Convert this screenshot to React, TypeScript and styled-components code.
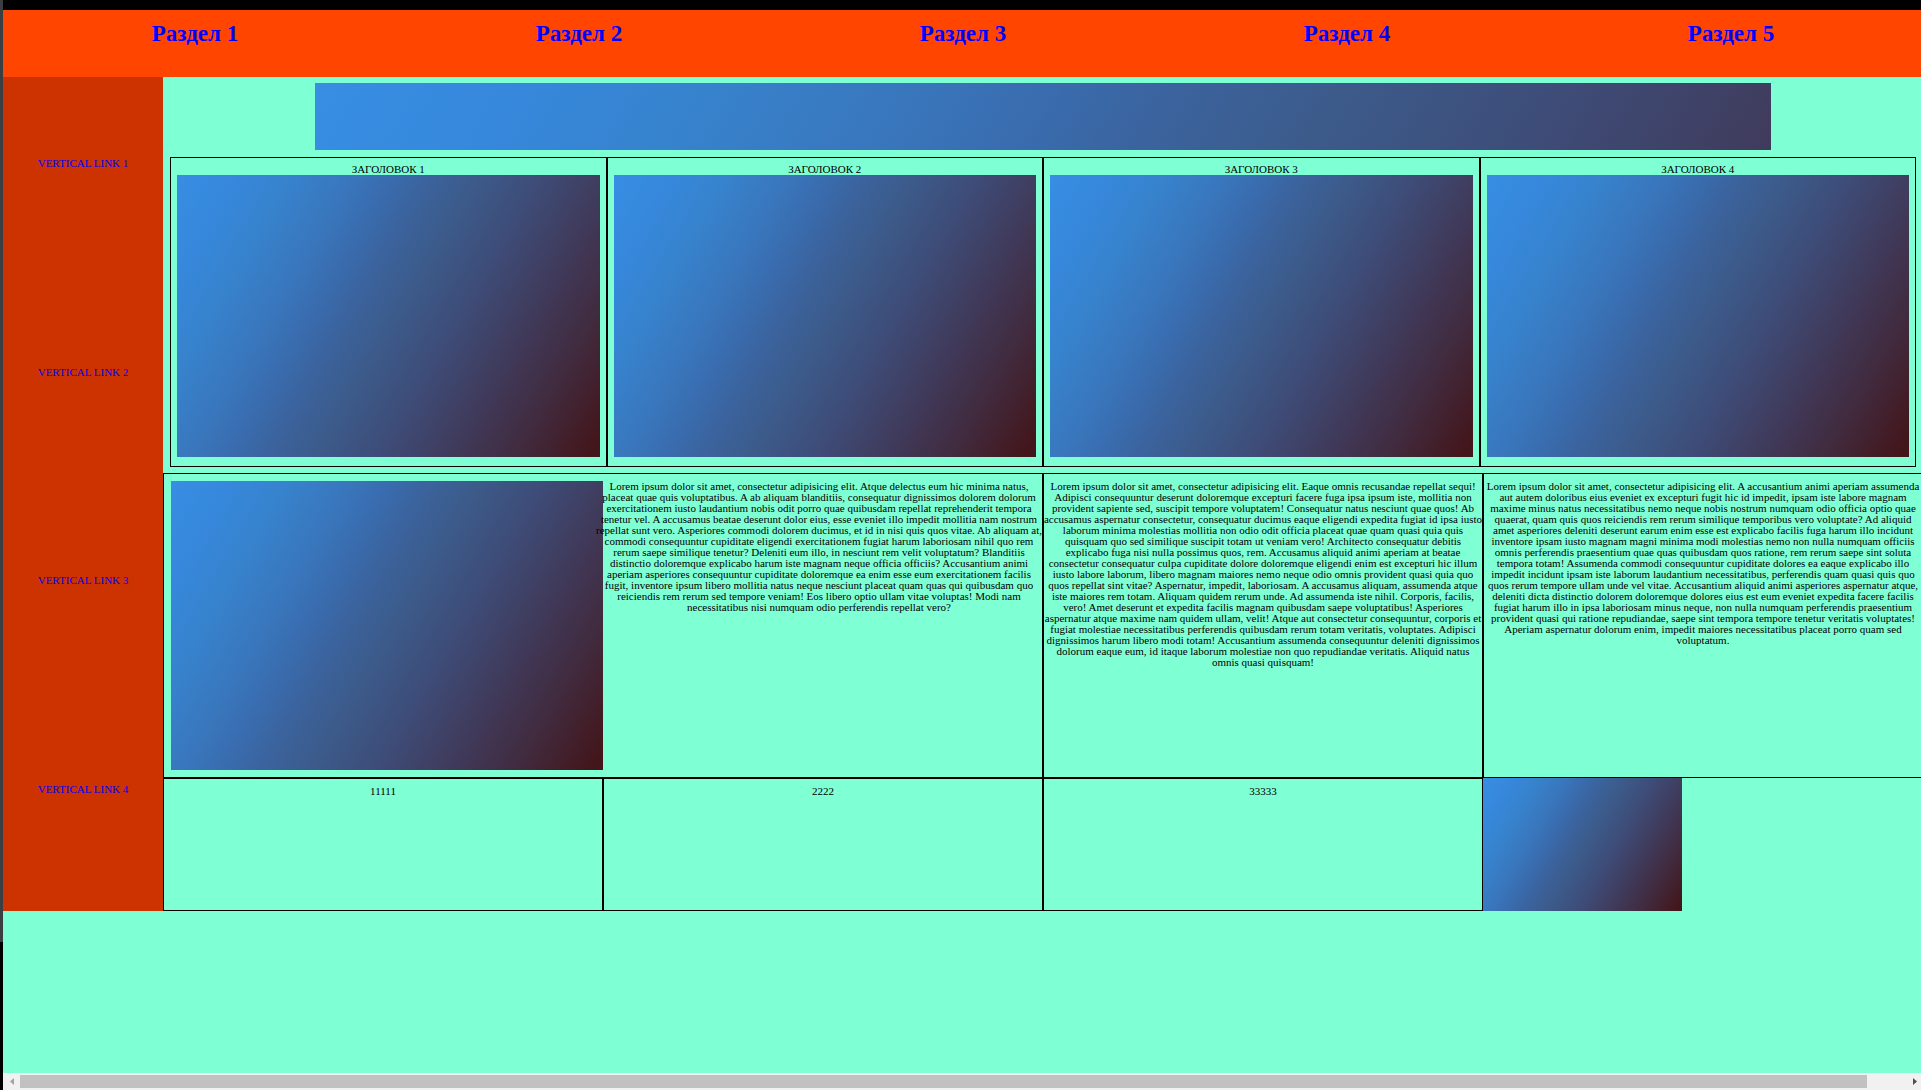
import React from "react";
import styled, { createGlobalStyle } from "styled-components";

const GlobalStyle = createGlobalStyle`
  * { box-sizing: border-box; margin: 0; padding: 0; }
  body {
    background: #000;
    font: 11px/11px "Liberation Serif", "Times New Roman", serif;
    color: #000;
    overflow: hidden;
  }
  a { color: #00f; text-decoration: none; }
`;

const Screen = styled.div`
  display: grid;
  grid-template-columns: 3px minmax(0, 1fr);
  height: 100vh;
  padding-top: 10px;
  background: linear-gradient(#3c3f41, #3c3f41) 0 0 / 3px 942px no-repeat #000;
`;

const Viewport = styled.div`
  grid-column: 2;
  display: flex;
  flex-direction: column;
  overflow: hidden;
  background: #7fffd4;
`;

const Page = styled.div`
  flex: 1;
  width: calc(100% + 2px);
`;

const TopNav = styled.nav`
  display: grid;
  grid-template-columns: repeat(5, 1fr);
  height: 67px;
  padding-top: 10px;
  background: #ff4500;
  font-size: 23px;
  line-height: 27px;
  font-weight: bold;
  text-align: center;
`;

const Body = styled.div`
  display: grid;
  grid-template-columns: 1fr 11fr;
`;

const SideNav = styled.nav`
  display: grid;
  grid-template-rows: repeat(4, 1fr);
  background: #cc3300;
  text-align: center;
`;

const SideItem = styled.div`
  padding-top: 81px;
`;

const Picture = styled.div<{ $height: number }>`
  height: ${(p) => p.$height}px;
  background: linear-gradient(
    120deg,
    #378ee3 0%,
    #3688dc 10%,
    #3782cc 20%,
    #3976bc 30%,
    #396db0 36%,
    #3b639d 43%,
    #3c5b8b 51%,
    #3e4b76 63%,
    #403857 76%,
    #412a3d 86%,
    #43161b 98%
  );
`;

const Banner = styled(Picture)`
  width: 1456px;
  max-width: 83%;
  margin: 6px auto 7px;
  background-size: 100% 970px;
`;

const Cards = styled.section`
  display: grid;
  grid-template-columns: repeat(4, 1fr);
  margin: 0 7px 6px;
`;

const Card = styled.article`
  border: 1px solid #000;
  padding: 6px 6px 9px;
  text-align: center;
`;

const CardTitle = styled.h2`
  font-size: 11px;
  font-weight: normal;
`;

const Grid = styled.section`
  display: grid;
  grid-template-columns: repeat(4, minmax(0, 1fr));
  text-align: center;
`;

const Cell = styled.div<{ $span?: number }>`
  grid-column: span ${(p) => p.$span ?? 1};
  border: 1px solid #000;
  padding: 7px;
`;

const SplitCell = styled(Cell)`
  display: grid;
  grid-template-columns: repeat(2, minmax(0, 1fr));
`;

const Verse = styled.p`
  display: flex;
  flex-direction: column;
  align-items: center;
  white-space: nowrap;
`;

const Thumb = styled(Picture)`
  width: 199px;
`;

const ScrollBar = styled.div`
  display: flex;
  align-items: center;
  width: calc(100% + 2px);
  height: 17px;
  background: #f1f1f1;
`;

const Arrow = styled.button<{ $right?: boolean }>`
  display: flex;
  align-items: center;
  justify-content: center;
  width: 17px;
  height: 17px;
  border: 0;
  background: none;
  color: ${(p) => (p.$right ? "#505050" : "#a3a3a3")};
`;

const Track = styled.div`
  flex: 1;
  padding-right: 39px;
`;

const Handle = styled.div`
  height: 13px;
  background: #c1c1c1;
`;

const sections = [1, 2, 3, 4, 5];
const items = [1, 2, 3, 4];

const first = [
  "Lorem ipsum dolor sit amet, consectetur adipisicing elit. Atque delectus eum hic minima natus,",
  "placeat quae quis voluptatibus. A ab aliquam blanditiis, consequatur dignissimos dolorem dolorum",
  "exercitationem iusto laudantium nobis odit porro quae quibusdam repellat reprehenderit tempora",
  "tenetur vel. A accusamus beatae deserunt dolor eius, esse eveniet illo impedit mollitia nam nostrum",
  "repellat sunt vero. Asperiores commodi dolorem ducimus, et id in nisi quis quos vitae. Ab aliquam at,",
  "commodi consequuntur cupiditate eligendi exercitationem fugiat harum laboriosam nihil quo rem",
  "rerum saepe similique tenetur? Deleniti eum illo, in nesciunt rem velit voluptatum? Blanditiis",
  "distinctio doloremque explicabo harum iste magnam neque officia officiis? Accusantium animi",
  "aperiam asperiores consequuntur cupiditate doloremque ea enim esse eum exercitationem facilis",
  "fugit, inventore ipsum libero mollitia natus neque nesciunt placeat quam quas qui quibusdam quo",
  "reiciendis rem rerum sed tempore veniam! Eos libero optio ullam vitae voluptas! Modi nam",
  "necessitatibus nisi numquam odio perferendis repellat vero?",
];

const second = [
  "Lorem ipsum dolor sit amet, consectetur adipisicing elit. Eaque omnis recusandae repellat sequi!",
  "Adipisci consequuntur deserunt doloremque excepturi facere fuga ipsa ipsum iste, mollitia non",
  "provident sapiente sed, suscipit tempore voluptatem! Consequatur natus nesciunt quae quos! Ab",
  "accusamus aspernatur consectetur, consequatur ducimus eaque eligendi expedita fugiat id ipsa iusto",
  "laborum minima molestias mollitia non odio odit officia placeat quae quam quasi quia quis",
  "quisquam quo sed similique suscipit totam ut veniam vero! Architecto consequatur debitis",
  "explicabo fuga nisi nulla possimus quos, rem. Accusamus aliquid animi aperiam at beatae",
  "consectetur consequatur culpa cupiditate dolore doloremque eligendi enim est excepturi hic illum",
  "iusto labore laborum, libero magnam maiores nemo neque odio omnis provident quasi quia quo",
  "quos repellat sint vitae? Aspernatur, impedit, laboriosam. A accusamus aliquam, assumenda atque",
  "iste maiores rem totam. Aliquam quidem rerum unde. Ad assumenda iste nihil. Corporis, facilis,",
  "vero! Amet deserunt et expedita facilis magnam quibusdam saepe voluptatibus! Asperiores",
  "aspernatur atque maxime nam quidem ullam, velit! Atque aut consectetur consequuntur, corporis et",
  "fugiat molestiae necessitatibus perferendis quibusdam rerum totam veritatis, voluptates. Adipisci",
  "dignissimos harum libero modi totam! Accusantium assumenda consequuntur deleniti dignissimos",
  "dolorum eaque eum, id itaque laborum molestiae non quo repudiandae veritatis. Aliquid natus",
  "omnis quasi quisquam!",
];

const third = [
  "Lorem ipsum dolor sit amet, consectetur adipisicing elit. A accusantium animi aperiam assumenda",
  "aut autem doloribus eius eveniet ex excepturi fugit hic id impedit, ipsam iste labore magnam",
  "maxime minus natus necessitatibus nemo neque nobis nostrum numquam odio officia optio quae",
  "quaerat, quam quis quos reiciendis rem rerum similique temporibus vero voluptate? Ad aliquid",
  "amet asperiores deleniti deserunt earum enim esse est explicabo facilis fuga harum illo incidunt",
  "inventore ipsam iusto magnam magni minima modi molestias nemo non nulla numquam officiis",
  "omnis perferendis praesentium quae quas quibusdam quos ratione, rem rerum saepe sint soluta",
  "tempora totam! Assumenda commodi consequuntur cupiditate dolores ea eaque explicabo illo",
  "impedit incidunt ipsam iste laborum laudantium necessitatibus, perferendis quam quasi quis quo",
  "quos rerum tempore ullam unde vel vitae. Accusantium aliquid animi asperiores aspernatur atque,",
  "deleniti dicta distinctio dolorem doloremque dolores eius est eum eveniet expedita facere facilis",
  "fugiat harum illo in ipsa laboriosam minus neque, non nulla numquam perferendis praesentium",
  "provident quasi qui ratione repudiandae, saepe sint tempora tempore tenetur veritatis voluptates!",
  "Aperiam aspernatur dolorum enim, impedit maiores necessitatibus placeat porro quam sed",
  "voluptatum.",
];

function Lines({ lines }: { lines: string[] }) {
  return (
    <Verse>
      {lines.map((line) => (
        <span key={line}>{line} </span>
      ))}
    </Verse>
  );
}

export default function App() {
  return (
    <Screen>
      <GlobalStyle />
      <Viewport>
        <Page>
          <TopNav>
            {sections.map((n) => (
              <div key={n}>
                <a href="#">Раздел {n}</a>
              </div>
            ))}
          </TopNav>
          <Body>
            <SideNav>
              {items.map((n) => (
                <SideItem key={n}>
                  <a href="#">VERTICAL LINK {n}</a>
                </SideItem>
              ))}
            </SideNav>
            <main>
              <Banner $height={67} />
              <Cards>
                {items.map((n) => (
                  <Card key={n}>
                    <CardTitle>ЗАГОЛОВОК {n}</CardTitle>
                    <Picture $height={282} />
                  </Card>
                ))}
              </Cards>
              <Grid>
                <SplitCell $span={2}>
                  <Picture $height={289} />
                  <Lines lines={first} />
                </SplitCell>
                <Cell>
                  <Lines lines={second} />
                </Cell>
                <Cell>
                  <Lines lines={third} />
                </Cell>
                <Cell>11111</Cell>
                <Cell>2222</Cell>
                <Cell>33333</Cell>
                <Thumb $height={133} />
              </Grid>
            </main>
          </Body>
        </Page>
        <ScrollBar>
          <Arrow aria-label="Scroll left">
            <svg width="4" height="7" viewBox="0 0 4 7">
              <path d="M4 0v7L0 3.5z" fill="currentColor" />
            </svg>
          </Arrow>
          <Track>
            <Handle />
          </Track>
          <Arrow $right aria-label="Scroll right">
            <svg width="4" height="7" viewBox="0 0 4 7">
              <path d="M0 0v7l4-3.5z" fill="currentColor" />
            </svg>
          </Arrow>
        </ScrollBar>
      </Viewport>
    </Screen>
  );
}
